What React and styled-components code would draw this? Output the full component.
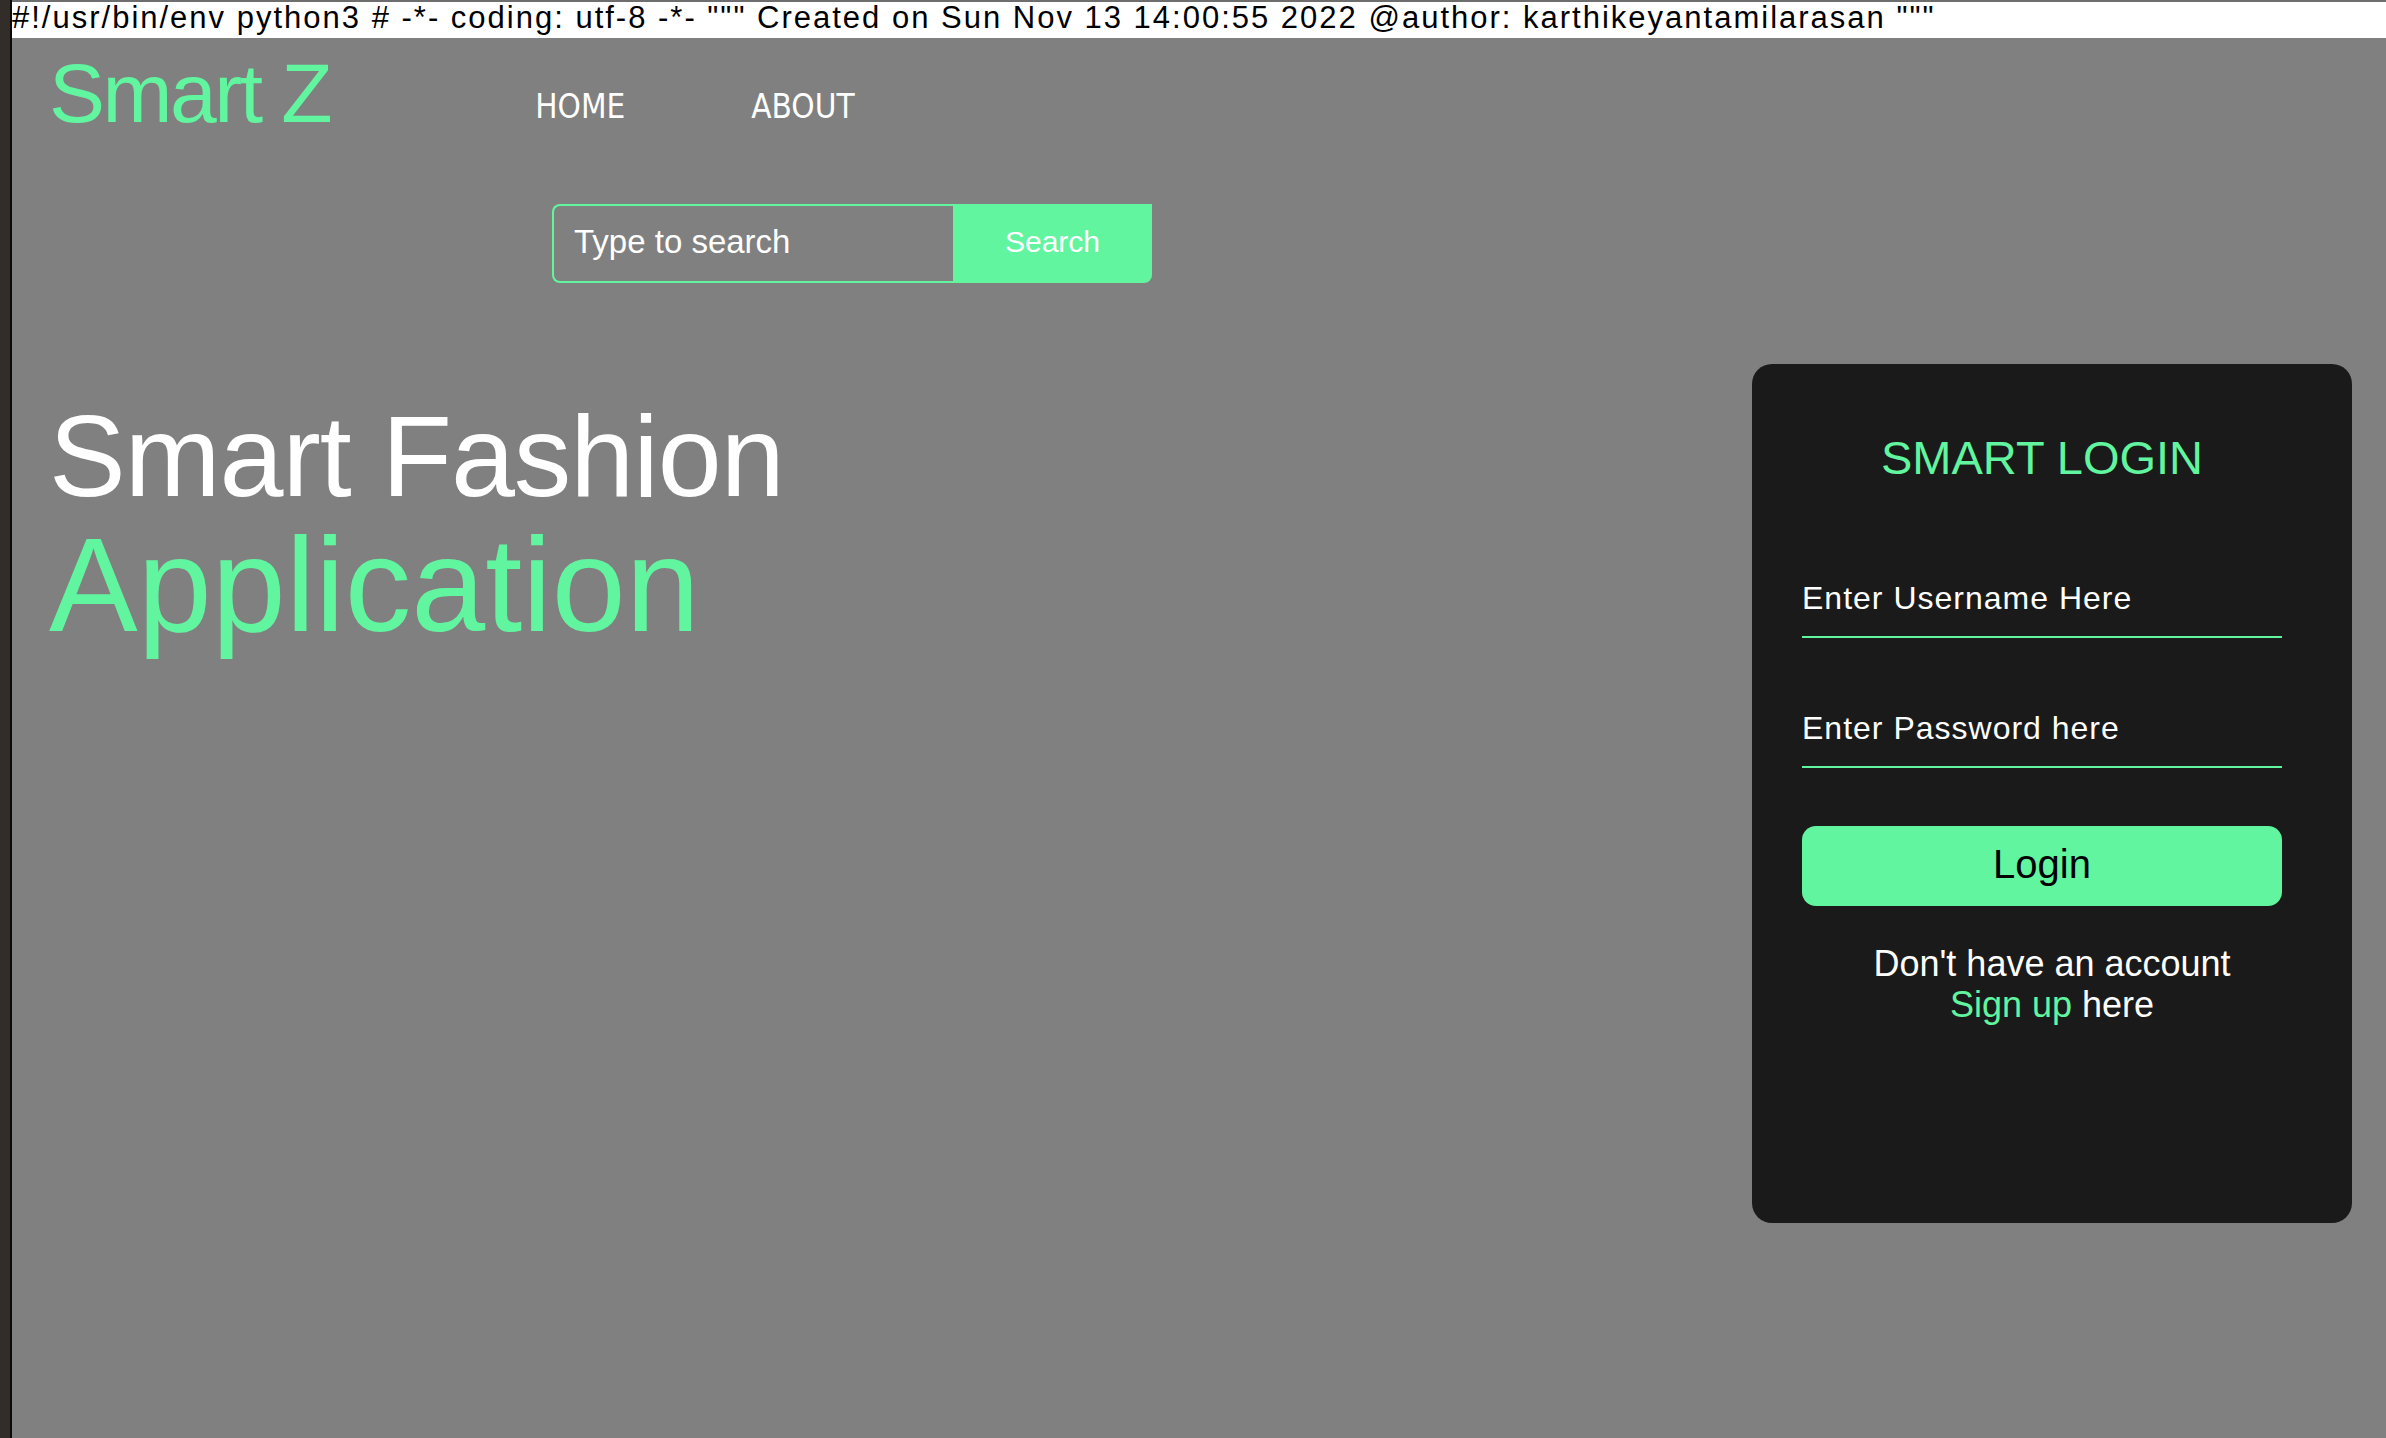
import React from "react";
import styled, { createGlobalStyle } from "styled-components";

const GREEN = "#61f59f";
const NARROW = `"DejaVu Sans Condensed", "Liberation Sans Narrow", "Liberation Sans", Arial, sans-serif`;
const SANS = `"Liberation Sans", Arial, sans-serif`;

const GlobalStyle = createGlobalStyle`
  html, body { margin: 0; padding: 0; background: #808080; }
  body { font-family: ${SANS}; }
  * { box-sizing: border-box; }
  input::placeholder { color: #ffffff; opacity: 1; }
`;

const Shell = styled.div`
  display: flex;
  min-height: 100vh;
`;

const SideStrip = styled.div`
  width: 12px;
  flex: none;
  background: #332d2a;
  border-right: 2px solid #0a0a0a;
`;

const Main = styled.div`
  flex: 1;
  display: flex;
  flex-direction: column;
  background: #808080;
`;

const SourceBar = styled.div`
  height: 38px;
  background: #ffffff;
  border-top: 2px solid #6e6e6e;
  padding: 0 0 4px 0;
  font-family: ${SANS};
  font-size: 31px;
  letter-spacing: 2px;
  line-height: 32px;
  color: #000;
  white-space: nowrap;
  overflow: hidden;
`;

const Page = styled.div`
  flex: 1;
  padding: 0 34px 0 37px;
`;

const Header = styled.header`
  display: flex;
  align-items: flex-start;
  padding-top: 13px;
`;

const Logo = styled.div`
  font-family: ${SANS};
  font-size: 84px;
  line-height: 1;
  letter-spacing: -2.5px;
  color: ${GREEN};
`;

const Nav = styled.nav`
  display: flex;
  gap: 126px;
  margin-left: 205px;
  margin-top: 39px;
`;

const NavLink = styled.a`
  font-family: ${NARROW};
  font-size: 33px;
  line-height: 1;
  color: #ffffff;
  text-decoration: none;
`;

const Body = styled.div`
  display: flex;
  justify-content: space-between;
  align-items: flex-start;
`;

const LeftColumn = styled.div`
  display: flex;
  flex-direction: column;
`;

const SearchForm = styled.form`
  display: flex;
  width: 600px;
  height: 79px;
  margin: 69px 0 0 503px;
`;

const SearchInput = styled.input`
  width: 401px;
  height: 100%;
  border: 2px solid ${GREEN};
  border-right: none;
  border-radius: 8px 0 0 8px;
  background: transparent;
  padding: 0 0 4px 20px;
  font-family: ${SANS};
  font-size: 33px;
  color: #ffffff;
  outline: none;
`;

const SearchButton = styled.button`
  width: 199px;
  height: 100%;
  border: none;
  border-radius: 0 0 8px 0;
  background: ${GREEN};
  color: #ffffff;
  font-family: ${SANS};
  font-size: 30px;
  padding: 0 0 4px 0;
`;

const Hero = styled.h1`
  margin: 116px 0 0 0;
  font-weight: normal;
  display: flex;
  flex-direction: column;
  gap: 5px;
`;

const HeroLine = styled.span`
  font-family: ${SANS};
  font-size: ${(p) => p.$size}px;
  letter-spacing: ${(p) => p.$spacing}px;
  line-height: 1;
  color: ${(p) => (p.$accent ? GREEN : "#ffffff")};
`;

const LoginCard = styled.div`
  width: 600px;
  height: 859px;
  margin-top: 229px;
  background: #1a1a1a;
  border-radius: 20px;
  padding: 70px 70px 0 50px;
  display: flex;
  flex-direction: column;
  align-items: stretch;
`;

const CardTitle = styled.h2`
  margin: 0;
  font-family: ${SANS};
  font-weight: normal;
  font-size: 47px;
  line-height: 1;
  color: ${GREEN};
  text-align: center;
`;

const Field = styled.input`
  box-sizing: content-box;
  width: 100%;
  height: 40px;
  line-height: 40px;
  margin-top: ${(p) => p.$gap}px;
  padding: 0 0 18px 0;
  background: transparent;
  border: none;
  border-bottom: 2px solid ${GREEN};
  font-family: ${SANS};
  font-size: 32px;
  letter-spacing: 1px;
  color: #ffffff;
  outline: none;
`;

const LoginButton = styled.button`
  margin-top: 58px;
  height: 80px;
  border: none;
  border-radius: 14px;
  background: ${GREEN};
  color: #000000;
  font-family: ${SANS};
  font-size: 40px;
  padding: 0 0 3px 0;
`;

const SignupText = styled.p`
  margin: 37px -70px 0 -50px;
  font-family: ${SANS};
  font-size: 36px;
  line-height: 41px;
  color: #ffffff;
  text-align: center;
`;

const SignupLink = styled.a`
  color: ${GREEN};
  text-decoration: none;
`;

export default function App() {
  return (
    <>
      <GlobalStyle />
      <Shell>
        <SideStrip />
        <Main>
          <SourceBar>
            #!/usr/bin/env python3 # -*- coding: utf-8 -*- """ Created on Sun Nov 13 14:00:55 2022 @author: karthikeyantamilarasan """
          </SourceBar>
          <Page>
            <Header>
              <Logo>Smart Z</Logo>
              <Nav>
                <NavLink href="#">HOME</NavLink>
                <NavLink href="#">ABOUT</NavLink>
              </Nav>
            </Header>
            <Body>
              <LeftColumn>
                <SearchForm onSubmit={(e) => e.preventDefault()}>
                  <SearchInput type="text" placeholder="Type to search" />
                  <SearchButton type="submit">Search</SearchButton>
                </SearchForm>
                <Hero>
                  <HeroLine $size={115} $spacing={-1}>Smart Fashion</HeroLine>
                  <HeroLine $size={133} $spacing={0} $accent>Application</HeroLine>
                </Hero>
              </LeftColumn>
              <LoginCard>
                <CardTitle>SMART LOGIN</CardTitle>
                <Field $gap={97} type="text" placeholder="Enter Username Here" />
                <Field $gap={70} type="password" placeholder="Enter Password here" />
                <LoginButton type="button">Login</LoginButton>
                <SignupText>
                  Don't have an account
                  <br />
                  <SignupLink href="#">Sign up</SignupLink> here
                </SignupText>
              </LoginCard>
            </Body>
          </Page>
        </Main>
      </Shell>
    </>
  );
}
